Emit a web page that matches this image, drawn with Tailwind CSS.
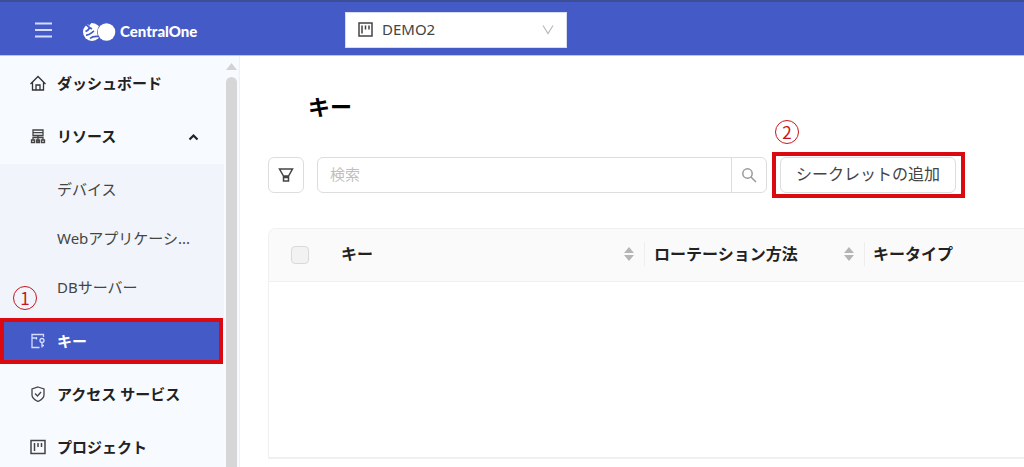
<!DOCTYPE html>
<html lang="ja">
<head>
  <meta charset="UTF-8">
  <title>CentralOne</title>
  <script src="https://cdn.jsdelivr.net/npm/@tailwindcss/browser@4"></script>
</head>
<body class="h-screen flex flex-col overflow-hidden bg-white text-[#333] font-['Noto_Sans','Noto_Sans_CJK_JP',sans-serif]">
  <!-- ヘッダー -->
  <header class="h-14 shrink-0 flex items-center pl-[34px] pt-[2px] bg-[#445ac7] border-t-2 border-t-[#3c4f96] border-b border-b-[#b9c2f5]">
    <button type="button" aria-label="メニュー" class="text-[#d5dcff]">
      <svg class="w-[18px] h-[18px]" viewBox="0 0 18 18" fill="none" stroke="currentColor" stroke-width="1.800"><path d="M1 2.500h17M1 9h17M1 15.500h17"/></svg>
    </button>
    <a href="/" class="ml-[30px] pt-1 w-[118px] flex items-center gap-1 text-white">
      <svg class="w-[34px] h-5 shrink-0" viewBox="0 0 34 20">
        <circle cx="10" cy="10" r="9" fill="#fff"/>
        <path d="M3 1.500L7.500 5.500C7 7.500 6 8.500 3.500 9.500M7.500 5.500L10 7M4 13C7 13.500 9 11 12 9M8 16.500C10 14.500 13 14 17 14.500" fill="none" stroke="#445ac7" stroke-width="1.700"/>
        <path d="M5 0L10 0L7 4z" fill="#445ac7"/>
        <circle cx="24.500" cy="10" r="9.500" fill="#445ac7"/>
        <circle cx="24.500" cy="10" r="8.800" fill="#fff"/>
      </svg>
      <span class="text-[15px] font-black font-['Lato','Noto_Sans',sans-serif]">CentralOne</span>
    </a>
    <div class="relative ml-[145px] w-[222px] h-9">
      <svg class="absolute left-[13px] top-[10px] w-[15px] h-[15px]" viewBox="0 0 15 15" fill="none" stroke="#444" stroke-width="1.500"><path d="M1 1h13v13H1zM4 3.500v8M7.500 3.500v4M11 3.500v4"/></svg>
      <select aria-label="プロジェクト" class="w-full h-full pl-9 bg-white border border-[#d9dcf0] text-[15px] text-[#444] appearance-none">
        <option>DEMO2</option>
      </select>
      <svg class="absolute right-[13px] top-[12px] w-3 h-3 pointer-events-none" viewBox="0 0 12 12" fill="none" stroke="#bbb" stroke-width="1.200"><path d="M1 1.500l5 8 5-8"/></svg>
    </div>
  </header>

  <div class="flex flex-1 min-h-0">
    <!-- サイドメニュー -->
    <aside class="w-60 shrink-0 flex bg-[#f7faff] border-r border-[#eef0f4]">
      <nav class="relative w-56 shrink-0 text-[15px]">
        <a href="#" class="h-[54px] flex items-center pl-[30px] gap-[11px] font-bold text-[#222]">
          <svg class="w-4 h-4" viewBox="0 0 16 16" fill="none" stroke="#333" stroke-width="1.300"><path d="M.5 9L8 1.500l7.500 7.500M2.500 7.500v7.500h11V7.500M6 15v-5h4v5"/></svg>
          ダッシュボード
        </a>
        <button type="button" class="w-full h-[54px] flex items-center pl-[30px] pr-[25px] pb-[2px] gap-[11px] font-bold text-[#222]">
          <svg class="w-4 h-4" viewBox="0 0 16 16" fill="none" stroke="#444" stroke-width="1.300"><path d="M3 2h10v5.500H3zM3 4.700h10M8 7.500v7M3 12v-2.500h10V12M1.500 12h3v2.500h-3zM6.500 12h3v2.500h-3zM11.500 12h3v2.500h-3z"/></svg>
          リソース
          <svg class="ml-auto w-[11px] h-[11px]" viewBox="0 0 11 11" fill="none" stroke="currentColor" stroke-width="2.200"><path d="M1.500 8.500l4-4 4 4"/></svg>
        </button>
        <div class="h-[154px] pt-px bg-[#f1f4fa] text-[#444]">
          <a href="#" class="h-[49px] flex items-center pl-[57px]">デバイス</a>
          <a href="#" class="h-[49px] flex items-center pl-[57px]">Webアプリケーシ...</a>
          <a href="#" class="h-[49px] flex items-center pl-[57px]">DBサーバー</a>
        </div>
        <a href="#" class="h-[46px] mb-[3px] mr-[1px] flex items-center pl-[26px] gap-[11px] font-bold text-white bg-[#445ac7] border-4 border-[#db0a10]">
          <svg class="w-4 h-4" viewBox="0 0 16 16" fill="none" stroke="#d5dcff" stroke-width="1.300"><path d="M9.500 14.500H2v-13h11.500V4M2 5h4.500M6.500 4v2.500"/><circle cx="12" cy="7.500" r="2"/><path d="M12 9.500v5M12 12.500h2"/></svg>
          キー
        </a>
        <a href="#" class="h-[54px] flex items-center pl-[30px] gap-[11px] font-bold text-[#222]">
          <svg class="w-4 h-4" viewBox="0 0 16 16" fill="none" stroke="#444" stroke-width="1.300"><path d="M8 1l6 2v6c0 3-3 5-6 6.500C5 14 2 12 2 9V3zM5 7.500l2.500 2.500L11 6"/></svg>
          アクセス サービス
        </a>
        <a href="#" class="h-[54px] flex items-center pl-[30px] pb-[2px] gap-[11px] font-bold text-[#222]">
          <svg class="w-4 h-4" viewBox="0 0 16 16" fill="none" stroke="#444" stroke-width="1.500"><path d="M1 1.500h14v13H1zM4.500 4v8M8 4v4M11.500 4v4"/></svg>
          プロジェクト
        </a>
        <span class="absolute left-[13px] top-[230px] w-6 h-6 flex items-center justify-center border border-[#c8161d] rounded-full text-[17px] text-[#c8161d] font-['Noto_Sans_CJK_JP',sans-serif]">1</span>
      </nav>
      <!-- スクロールバー -->
      <div class="ml-[2px] w-[11px] flex flex-col items-center gap-[7px] pt-[7px]">
        <svg class="w-[11px] h-[7px] shrink-0" viewBox="0 0 11 7" fill="#d2d2d2"><path d="M5.500 0L11 7H0z"/></svg>
        <div class="w-[11px] flex-1 rounded-t-full bg-[#d6d6d6]"></div>
      </div>
    </aside>

    <main class="flex-1 min-w-0 pl-7 pt-9 overflow-hidden">
      <h1 class="pl-10 h-7 leading-7 text-[22px] font-bold text-black">キー</h1>

      <div class="relative mt-8 h-[46px] flex items-center">
        <button type="button" aria-label="フィルター" class="w-9 h-9 shrink-0 flex items-center justify-center border border-[#ddd] rounded-md">
          <svg class="w-4 h-4" viewBox="0 0 16 16" fill="none" stroke="#444" stroke-width="1.500"><path d="M1.500 2h13l-4 7h-5zM5.500 9v5h5V9M5.500 10.500h5"/></svg>
        </button>
        <div class="ml-[13px] w-[450px] h-9 flex border border-[#ddd] rounded-md">
          <input type="text" aria-label="検索" placeholder="検索" class="flex-1 min-w-0 pl-3 pb-[2px] text-[15px] placeholder:text-[#bfbfbf] outline-none">
          <button type="button" aria-label="検索を実行" class="w-[35px] flex items-center justify-center border-l border-[#ddd]">
            <svg class="w-4 h-4" viewBox="0 0 16 16" fill="none" stroke="#999" stroke-width="1.500"><circle cx="6.500" cy="6.500" r="4.700"/><path d="M10 10L15 15"/></svg>
          </button>
        </div>
        <div class="ml-[5px] w-[193px] h-[46px] flex items-center border-4 border-[#db0a10]">
          <button type="button" class="ml-1 w-[176px] h-9 pb-[2px] border border-[#ddd] rounded-md text-base text-[#444]">シークレットの追加</button>
        </div>
        <span class="absolute left-[507px] -top-8 w-6 h-6 flex items-center justify-center border border-[#c8161d] rounded-full text-[17px] text-[#c8161d] font-['Noto_Sans_CJK_JP',sans-serif]">2</span>
      </div>

      <div class="mt-[30px] h-[231px] border-l border-t border-b-2 border-[#f0f0f0] rounded-tl-lg overflow-hidden">
        <table class="w-full table-fixed text-base text-[#222]">
          <thead>
            <tr class="h-[52px] bg-[#fafafa] border-b border-[#f0f0f0] text-left">
              <th class="w-16 pl-[22px]"><input type="checkbox" aria-label="すべて選択" disabled class="block w-[18px] h-[18px] appearance-none bg-[#f2f2f2] border border-[#d9d9d9] rounded"></th>
              <th class="w-[312px] pl-2 pb-[2px]">
                <div class="flex items-center justify-between pr-[10px] border-r border-[#eee]">キー
                  <svg class="w-[10px] h-4" viewBox="0 0 10 16" fill="#b5b5b5"><path d="M5 1l5 6H0zM5 15l5-6H0z"/></svg>
                </div>
              </th>
              <th class="w-[220px] pl-[9px] pb-[2px]">
                <div class="flex items-center justify-between pr-[10px] border-r border-[#eee]">ローテーション方法
                  <svg class="w-[10px] h-4" viewBox="0 0 10 16" fill="#b5b5b5"><path d="M5 1l5 6H0zM5 15l5-6H0z"/></svg>
                </div>
              </th>
              <th class="pl-2 pb-[2px]">キータイプ</th>
            </tr>
          </thead>
        </table>
      </div>
    </main>
  </div>
</body>
</html>
